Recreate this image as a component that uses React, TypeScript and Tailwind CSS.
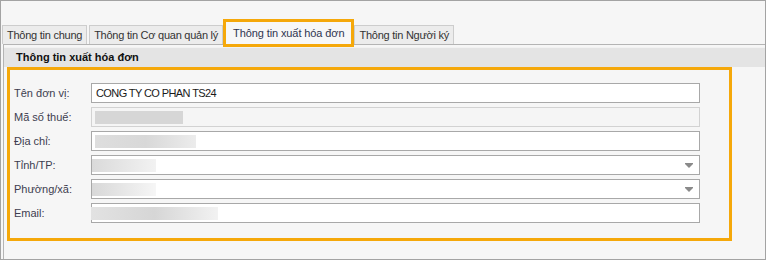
import * as React from "react"

const font = { fontFamily: '"Liberation Sans", Arial, sans-serif' }

type Row = {
  label: string
  value?: string
  blur?: string
  disabled?: boolean
  select?: boolean
}

const rows: Row[] = [
  { label: "Tên đơn vị:", value: "CONG TY CO PHAN TS24" },
  { label: "Mã số thuế:", blur: "ml-[3px] w-[88px] bg-[#d6d6d6]", disabled: true },
  { label: "Địa chỉ:", blur: "ml-[3px] w-[101px] bg-gradient-to-r from-[#dedede] via-[#d8d8d8] to-[#ececec]" },
  { label: "Tỉnh/TP:", blur: "w-[64px] bg-gradient-to-r from-[#dadada] to-[#f2f2f2]", select: true },
  { label: "Phường/xã:", blur: "w-[64px] bg-gradient-to-r from-[#d8d8d8] to-[#f6f6f6]", select: true },
  { label: "Email:", blur: "-ml-[1px] w-[127px] bg-gradient-to-r from-[#e2e2e2] via-[#d6d6d6] to-[#f2f2f2]" },
]

const tabs = ["Thông tin chung", "Thông tin Cơ quan quản lý", "Thông tin xuất hóa đơn", "Thông tin Người ký"]

function Field({ row }: { row: Row }) {
  return (
    <div className="flex h-[20px] items-center">
      <div className="w-[81px] pl-[4px] text-[11px] text-[#3d3d4f]">{row.label}</div>
      <div
        className={`relative flex h-[20px] flex-1 items-center border ${
          row.disabled ? "border-[#d2d2d2] bg-[#f5f5f5]" : "border-[#a8a8a8] bg-white"
        }`}
      >
        {row.value && <span className="pl-[4px] text-[11px] tracking-[-0.6px] text-[#1a1a1a]">{row.value}</span>}
        {row.blur && <div className={`h-[13px] ${row.blur}`} />}
        {row.select && (
          <svg className="absolute right-[6px] top-[7px]" width="8" height="5" viewBox="0 0 8 5">
            <path d="M0 0h8v1L4 5 0 1z" fill="#8a8a8a" />
          </svg>
        )}
      </div>
    </div>
  )
}

export default function App() {
  return (
    <div className="h-[260px] w-[766px] overflow-hidden border border-[#a3a3a3] bg-[#f6f6f6]" style={font}>
      <div className="h-[23px]" />
      <div className="flex h-[20px] items-end gap-[2px] pl-[1px]">
        {tabs.map((t, i) =>
          i === 2 ? (
            <div
              key={t}
              className="relative z-10 mx-[1px] flex h-[22px] items-center bg-[#f7f7f7] px-[7px] text-[11px] tracking-[-0.1px] text-[#2f3550] outline outline-[3px] outline-[#f5a80a]"
            >
              {t}
            </div>
          ) : (
            <div
              key={t}
              className="flex h-[19px] items-center border border-b-0 border-[#cdcdcd] bg-[#ececec] px-[4px] text-[11px] tracking-[-0.25px] text-[#333]"
            >
              {t}
            </div>
          ),
        )}
      </div>
      <div className="ml-[2px] h-[216px] border-l border-t border-[#b4b4b4]">
        <div className="mt-[2px] flex h-[20px] items-center border-t border-[#f2f2f2] bg-[#e4e4e4] pl-[12px] text-[11px] font-bold text-[#111]">
          Thông tin xuất hóa đơn
        </div>
        <div className="ml-[3px] h-[174px] w-[725px] border-[3px] border-[#f5a80a] pr-[29px] pt-[13px]">
          <div className="flex flex-col gap-[4px]">
            {rows.map((r) => (
              <Field key={r.label} row={r} />
            ))}
          </div>
        </div>
      </div>
    </div>
  )
}
